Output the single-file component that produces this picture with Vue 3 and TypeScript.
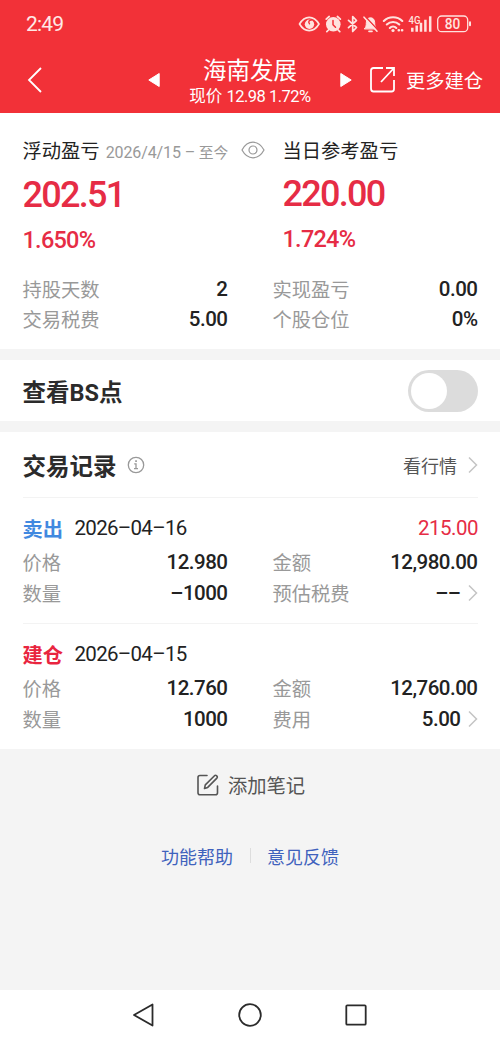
<script setup lang="ts">
interface Cell {
  label: string
  value: string
  link?: boolean
}
interface TradeRecord {
  kind: 'sell' | 'open'
  title: string
  date: string
  profit?: string
  cells: Cell[]
}

const stats: Cell[] = [
  { label: '持股天数', value: '2' },
  { label: '实现盈亏', value: '0.00' },
  { label: '交易税费', value: '5.00' },
  { label: '个股仓位', value: '0%' },
]

const records: TradeRecord[] = [
  {
    kind: 'sell',
    title: '卖出',
    date: '2026–04–16',
    profit: '215.00',
    cells: [
      { label: '价格', value: '12.980' },
      { label: '金额', value: '12,980.00' },
      { label: '数量', value: '–1000' },
      { label: '预估税费', value: '––', link: true },
    ],
  },
  {
    kind: 'open',
    title: '建仓',
    date: '2026–04–15',
    cells: [
      { label: '价格', value: '12.760' },
      { label: '金额', value: '12,760.00' },
      { label: '数量', value: '1000' },
      { label: '费用', value: '5.00', link: true },
    ],
  },
]
</script>

<template>
  <div class="screen">
    <header class="top">
      <div class="status">
        <span class="clock">2:49</span>
        <svg class="status-icons" width="174" height="24" viewBox="0 0 174 24" fill="none" stroke="#ffe3df" stroke-width="1.7" stroke-linecap="round" stroke-linejoin="round">
          <!-- eye comfort -->
          <path d="M1.500 12C4.500 7 7.500 5.300 11.200 5.300S18 7 21 12C18 17 14.900 18.600 11.200 18.600S4.500 17 1.500 12Z" />
          <circle cx="11.500" cy="12.200" r="4.700" fill="#ffe3df" stroke="none" />
          <path d="M11.500 11.700c-1.500-1.500-.5-4 2-3.700" stroke="#f23138" stroke-width="1.400" />
          <!-- alarm -->
          <circle cx="35.300" cy="12.300" r="7.300" fill="#ffe3df" stroke="none" />
          <path d="M28.200 7.200l3-2.700M42.400 7.200l-3-2.700M30.500 18l-1.700 1.700M40.100 18l1.700 1.700" />
          <path d="M35 8.500v4.300l2.500 2.500" stroke="#f23138" stroke-width="1.500" />
          <!-- bluetooth -->
          <path d="M50.500 8.300l8 7.200-3.800 4V4.500l3.800 4-8 7.200" stroke-width="1.700" />
          <!-- muted bell -->
          <path d="M66.500 16.700c1.500-1.500 1.800-3 1.800-6 0-3 1.600-4.900 4.200-4.900s4.200 1.900 4.200 4.900c0 3 .3 4.500 1.800 6Z" fill="#ffe3df" stroke-width="1" />
          <path d="M71 19.300h3" stroke-width="1.700" />
          <path d="M67.500 4.700L80 18.200" stroke="#f23138" stroke-width="1.500" stroke-linecap="butt" />
          <path d="M66 5.200L79 19.200" stroke-width="1.600" />
          <!-- wi-fi -->
          <path d="M85.800 9c5-5 13.500-5 18.500 0M88.800 12.500c3.500-3.400 9-3.400 12.500 0M91.800 15.900c1.800-1.800 4.700-1.800 6.500 0" stroke-width="2.100" />
          <circle cx="95" cy="18.500" r="1.600" fill="#ffe3df" stroke="none" />
          <path d="M100.700 18.200h.2M104 18.200h.2" stroke-width="2.500" />
          <!-- signal -->
          <path d="M114.300 15.800v4M118.700 13.500v6.300M123 10.700v9.100M127.400 7.700v12.100M132.200 4.300v15.500" stroke-width="2.500" stroke-linecap="butt" />
          <!-- battery -->
          <rect x="139.700" y="4" width="30" height="15.700" rx="4" stroke-width="1.300" />
          <path d="M172 10.300v3" stroke-width="2" />
          <g fill="#ffe3df" stroke="none" font-family="Roboto, sans-serif">
            <text x="110.500" y="11.800" font-size="10.500" font-weight="500" textLength="12" lengthAdjust="spacingAndGlyphs">4G</text>
            <text x="146.700" y="17.400" font-size="15.500" font-weight="500" textLength="15.500" lengthAdjust="spacingAndGlyphs">80</text>
          </g>
        </svg>
      </div>
      <div class="nav">
        <svg class="back" width="16" height="28" viewBox="0 0 16 28" fill="none" stroke="#fff" stroke-width="1.800"><path d="M14 2L2 14l12 12" /></svg>
        <svg class="prev" width="12" height="16" viewBox="0 0 12 16"><path d="M11.200 1.500v13L.8 8Z" fill="#fff" stroke="#fff" stroke-linejoin="round" /></svg>
        <div class="stock">
          <div class="name">海南发展</div>
          <div class="price">现价 <span>12.98 1.72%</span></div>
        </div>
        <svg class="next" width="12" height="16" viewBox="0 0 12 16"><path d="M.8 1.500v13L11.200 8Z" fill="#fff" stroke="#fff" stroke-linejoin="round" /></svg>
        <svg class="share" width="28" height="28" viewBox="0 0 28 28" fill="none" stroke="#fff" stroke-width="1.800"><path d="M14 2H4.500Q2 2 2 4.500v18Q2 25.500 4.500 25.500h18q2.500 0 2.500-2.500V14M17 2h8v8M25 2L12 16" /></svg>
        <span class="more">更多建仓</span>
      </div>
    </header>

    <section class="card summary">
      <div class="totals">
        <div class="total">
          <div class="caption">
            <span>浮动盈亏</span>
            <span class="range"><span class="range-num">2026/4/15 –</span> 至今</span>
            <svg width="24" height="18" viewBox="0 0 24 18" fill="none" stroke="#999" stroke-width="1.200"><path d="M1 9C4 3.500 7.700 1.200 12 1.200S20 3.500 23 9c-3 5.500-6.700 7.800-11 7.800S4 14.500 1 9Z" /><circle cx="12" cy="9" r="4" /></svg>
          </div>
          <div class="amount">202.51</div>
          <div class="percent">1.650%</div>
        </div>
        <div class="total day">
          <div class="caption"><span>当日参考盈亏</span></div>
          <div class="amount">220.00</div>
          <div class="percent">1.724%</div>
        </div>
      </div>
      <div class="grid stats">
        <div v-for="c in stats" :key="c.label" class="cell">
          <span class="label">{{ c.label }}</span>
          <span class="value">{{ c.value }}</span>
        </div>
      </div>
    </section>

    <section class="card bs">
      <span class="heading">查看BS点</span>
      <span class="switch"><i /></span>
    </section>

    <section class="card trades">
      <div class="trades-head">
        <span class="heading">交易记录</span>
        <svg class="info" width="18" height="18" viewBox="0 0 18 18" fill="none" stroke="#999" stroke-width="1.300"><circle cx="9" cy="9" r="7.700" /><path d="M7.200 7.900H9v4.700M7 12.700h4" /><path d="M8.200 5.100h1.700" stroke-width="1.700" /></svg>
        <span class="quote">看行情</span>
        <svg class="arrow" width="10" height="18" viewBox="0 0 10 18"><path d="M1 1.500L8.500 9 1 16.500" /></svg>
      </div>
      <div v-for="r in records" :key="r.date" class="record">
        <div class="record-head">
          <span class="kind" :class="r.kind">{{ r.title }}</span>
          <span class="date">{{ r.date }}</span>
          <span v-if="r.profit" class="profit">{{ r.profit }}</span>
        </div>
        <div class="grid">
          <div v-for="c in r.cells" :key="c.label" class="cell">
            <span class="label">{{ c.label }}</span>
            <span class="value">{{ c.value }}</span>
            <svg v-if="c.link" class="arrow" width="10" height="18" viewBox="0 0 10 18"><path d="M1 1.500L8.500 9 1 16.500" /></svg>
          </div>
        </div>
      </div>
    </section>

    <div class="note">
      <svg width="22" height="22" viewBox="0 0 22 22" fill="none" stroke="#555" stroke-width="1.600" stroke-linejoin="round" stroke-linecap="round"><path d="M10 1.500H3Q1 1.500 1 3.500v15.200q0 2 2 2h15.500q2 0 2-2V12" /><path d="M7.500 14.500l.8-3.600 9.200-9.200q1-.8 2 0l.4.400q.8 1 0 2l-9.200 9.300Z" /></svg>
      <span>添加笔记</span>
    </div>
    <div class="links">
      <a>功能帮助</a>
      <i />
      <a>意见反馈</a>
    </div>

    <footer class="system">
      <svg width="22" height="26" viewBox="0 0 22 26"><path d="M19.500 2.500v21L1 13Z" /></svg>
      <svg width="26" height="26" viewBox="0 0 26 26"><circle cx="13" cy="13" r="10.800" /></svg>
      <svg width="22" height="26" viewBox="0 0 22 26"><rect x="1.300" y="3.300" width="19.400" height="19.400" rx="1" /></svg>
    </footer>
  </div>
</template>

<style>
body {
  margin: 0;
}
</style>

<style scoped>
.screen {
  box-sizing: border-box;
  width: 500px;
  height: 1039px;
  display: flex;
  flex-direction: column;
  overflow: hidden;
  background: #f4f4f4;
  color: #222;
  font-family: Roboto, 'Noto Sans CJK SC', sans-serif;
  white-space: nowrap;
}
.screen svg {
  flex: none;
  display: block;
}
.top {
  height: 113px;
  background: #f23138;
  color: #fff;
}
.status {
  height: 47px;
  display: flex;
  align-items: center;
  justify-content: space-between;
  padding: 0 28px 0 26px;
}
.clock {
  font-size: 21px;
  letter-spacing: -0.8px;
  color: #ffe9e6;
}
.nav {
  height: 66px;
  display: flex;
  align-items: center;
  padding-left: 27px;
}
.prev {
  margin-left: 105px;
}
.stock {
  width: 122px;
  margin: 0 29px 0 29px;
  padding-top: 5px;
  text-align: center;
}
.name {
  font-size: 23.5px;
  line-height: 28px;
}
.price {
  font-size: 16.5px;
  line-height: 24px;
}
.price span {
  font-size: 16.5px;
  letter-spacing: -0.5px;
}
.share {
  margin-left: 17px;
}
.more {
  margin-left: 9px;
  font-size: 19.3px;
}
.card {
  background: #fff;
  box-sizing: border-box;
  padding: 0 22px 0 22.5px;
}
.summary {
  height: 236px;
}
.totals {
  display: flex;
}
.total {
  width: 260px;
  padding-top: 21.5px;
}
.caption {
  display: flex;
  align-items: center;
  height: 30px;
  font-size: 19.3px;
}
.range {
  margin: 3px 13px 0 6px;
  font-size: 14.8px;
  color: #999;
}
.range-num {
  font-size: 16px;
  letter-spacing: -0.1px;
}
.amount {
  height: 58px;
  line-height: 61px;
  font-size: 36px;
  font-weight: 500;
  letter-spacing: -1.7px;
  color: #e62c45;
}
.percent {
  height: 32px;
  line-height: 34px;
  font-size: 23.5px;
  font-weight: 500;
  letter-spacing: -0.75px;
  color: #e62c45;
}
.day {
  width: 190px;
}
.day .amount {
  height: 57px;
  line-height: 59px;
}
.grid {
  display: grid;
  grid-template-columns: 205px 205px;
  column-gap: 45px;
  grid-auto-rows: 31px;
}
.stats {
  margin-top: 20px;
  grid-auto-rows: 29.5px;
}
.cell {
  display: flex;
  align-items: center;
}
.label {
  flex: 1;
  font-size: 19.3px;
  color: #999;
}
.value {
  font-size: 20.5px;
  font-weight: 500;
  letter-spacing: -0.5px;
  color: #222;
}
.arrow {
  margin-left: 7px;
  fill: none;
  stroke: #c4c4c4;
  stroke-width: 1.5;
}
.bs {
  height: 61px;
  margin-top: 11px;
  display: flex;
  align-items: center;
  justify-content: space-between;
}
.heading {
  font-size: 23.5px;
  font-weight: 700;
  color: #2b2b2b;
}
.switch {
  box-sizing: border-box;
  width: 70px;
  height: 42px;
  padding: 3px;
  border-radius: 21px;
  background: #dcdcdc;
}
.switch i {
  display: block;
  width: 36px;
  height: 36px;
  border-radius: 50%;
  background: #fff;
}
.trades {
  height: 317px;
  margin-top: 11px;
}
.trades-head {
  height: 65px;
  display: flex;
  align-items: center;
}
.info {
  margin-left: 10px;
}
.quote {
  margin-left: auto;
  font-size: 18px;
  color: #555;
}
.trades-head .arrow {
  margin-left: 11px;
}
.record {
  box-sizing: border-box;
  height: 126px;
  padding-top: 13px;
  border-top: 1px solid #f3f3f3;
}
.record-head {
  height: 34px;
  margin-bottom: 1px;
  display: flex;
  align-items: center;
}
.kind {
  width: 52px;
  font-size: 20.3px;
  font-weight: 700;
}
.sell {
  color: #4189e0;
}
.open {
  color: #e9253f;
}
.date {
  font-size: 20.5px;
  letter-spacing: -0.7px;
}
.profit {
  margin-left: auto;
  font-size: 20.5px;
  letter-spacing: -0.5px;
  color: #e62c45;
}
.note {
  height: 71px;
  display: flex;
  align-items: center;
  justify-content: center;
  gap: 9px;
  font-size: 19.3px;
  color: #555;
  padding-left: 2px;
}
.links {
  height: 71px;
  display: flex;
  align-items: center;
  justify-content: center;
  font-size: 18px;
  color: #3f62bd;
}
.links i {
  width: 1px;
  height: 15px;
  margin: 0 16px 0 17px;
  background: #ddd;
}
.system {
  height: 49px;
  margin-top: auto;
  display: flex;
  align-items: center;
  justify-content: center;
  gap: 82px;
  background: #fff;
}
.system svg {
  fill: none;
  stroke: #2b2b2b;
  stroke-width: 1.8;
  stroke-linejoin: round;
}
</style>
